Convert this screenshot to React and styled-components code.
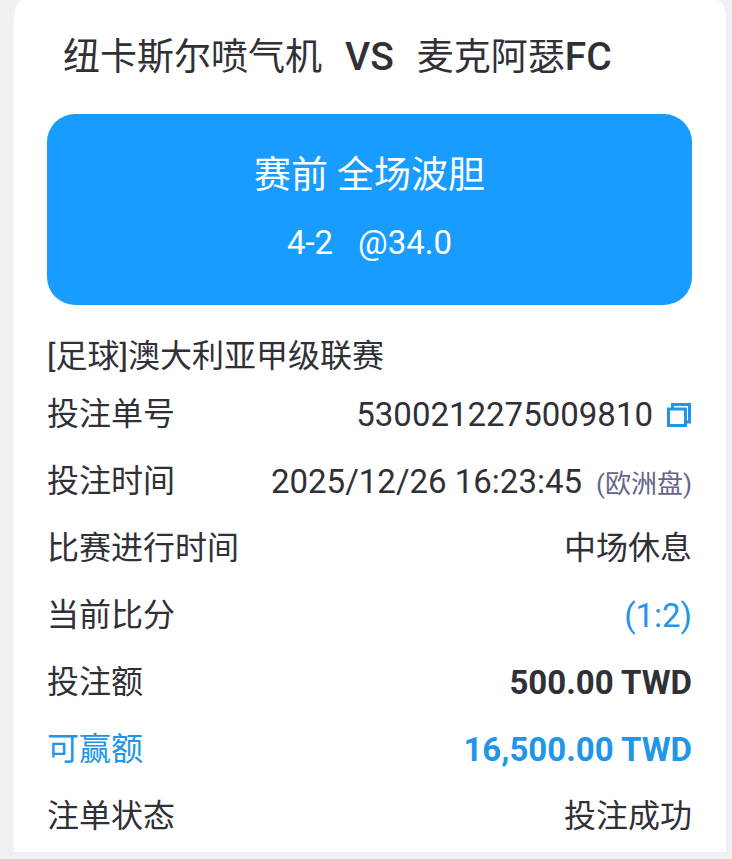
import React from "react";
import styled, { createGlobalStyle } from "styled-components";

const GlobalStyle = createGlobalStyle`
  * {
    box-sizing: border-box;
  }
  body {
    margin: 0;
    background: #f0f0f4;
    color: #303036;
    font-family: Roboto, "Noto Sans CJK SC", sans-serif;
  }
`;

const Card = styled.main`
  margin: 0 6px 7px 14px;
  padding: 1px 34px 2px 33px;
  background: #fff;
  border-radius: 10px 10px 0 0 / 18px 18px 0 0;
`;

const Title = styled.h1`
  display: flex;
  align-items: baseline;
  gap: 23px;
  margin: 0;
  padding: 0 16px;
  font-size: 37px;
  font-weight: 400;
  line-height: 113px;
  white-space: nowrap;
`;

const Latin = styled.span`
  font-size: 39px;
  font-weight: 500;
`;

const Pick = styled.section`
  display: flex;
  flex-direction: column;
  align-items: center;
  margin-bottom: 26px;
  padding: 29px 0 28px;
  border-radius: 28px;
  background: #189cff;
  color: #fff;
`;

const Market = styled.h2`
  margin: 0;
  font-size: 37px;
  font-weight: 400;
  line-height: 66px;
`;

const Odds = styled.div`
  display: flex;
  gap: 25px;
  font-size: 33px;
  line-height: 68px;
`;

const League = styled.div`
  font-size: 32px;
  line-height: 50px;
`;

const Details = styled.dl`
  margin: 0;
`;

const Row = styled.div`
  display: flex;
  align-items: center;
  justify-content: space-between;
  line-height: 67px;
  color: ${(props) => (props.$active ? "#2196e8" : "inherit")};
`;

const Label = styled.dt`
  font-size: 32px;
  white-space: nowrap;
`;

const Value = styled.dd`
  display: flex;
  align-items: baseline;
  gap: 14px;
  margin: 0;
  font-size: ${(props) => (props.$text ? "32px" : "33px")};
  font-weight: ${(props) => (props.$bold ? 700 : 400)};
  color: ${(props) => (props.$blue ? "#2196e8" : "inherit")};
  white-space: nowrap;
`;

const OddsType = styled.span`
  font-size: 26px;
  line-height: 32px;
  color: #66668a;
`;

const CopyButton = styled.button`
  display: flex;
  align-self: center;
  padding: 0;
  border: 0;
  background: none;
  color: #2196e8;
  cursor: pointer;
`;

const BET_NO = "5300212275009810";

function CopyIcon() {
  return (
    <svg width="25" height="25" viewBox="0 0 25 25" fill="none" stroke="currentColor" strokeWidth="3">
      <path d="M5.5 6V2.5H22.5V20H19" />
      <path d="M1.5 7H18.5V23.5H1.5z" />
    </svg>
  );
}

export default function App() {
  const handleCopy = () => {
    navigator.clipboard?.writeText(BET_NO);
  };

  return (
    <>
      <GlobalStyle />
      <Card>
        <Title>
          <span>纽卡斯尔喷气机</span>
          <Latin>VS</Latin>
          <span>麦克阿瑟<Latin>FC</Latin></span>
        </Title>
        <Pick>
          <Market>赛前 全场波胆</Market>
          <Odds>
            <span>4-2</span>
            <span>@34.0</span>
          </Odds>
        </Pick>
        <League>[足球]澳大利亚甲级联赛</League>
        <Details>
          <Row>
            <Label>投注单号</Label>
            <Value>
              {BET_NO}
              <CopyButton type="button" aria-label="复制" onClick={handleCopy}>
                <CopyIcon />
              </CopyButton>
            </Value>
          </Row>
          <Row>
            <Label>投注时间</Label>
            <Value>
              2025/12/26 16:23:45
              <OddsType>(欧洲盘)</OddsType>
            </Value>
          </Row>
          <Row>
            <Label>比赛进行时间</Label>
            <Value $text>中场休息</Value>
          </Row>
          <Row>
            <Label>当前比分</Label>
            <Value $blue>(1:2)</Value>
          </Row>
          <Row>
            <Label>投注额</Label>
            <Value $bold>500.00 TWD</Value>
          </Row>
          <Row $active>
            <Label>可赢额</Label>
            <Value $bold>16,500.00 TWD</Value>
          </Row>
          <Row>
            <Label>注单状态</Label>
            <Value $text>投注成功</Value>
          </Row>
        </Details>
      </Card>
    </>
  );
}
